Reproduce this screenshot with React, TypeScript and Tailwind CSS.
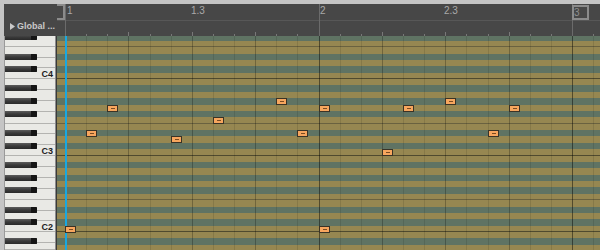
import React from "react";

// piano roll geometry (px, grid-relative)
const ROW = 6.375;
const GRID_H = 214;
const C4_BOTTOM = 43; // the B3/C4 line
const STEP = 21.125; // one triplet sixteenth
const ORIGIN = 8; // bar 1

const rowBottom = (p: number) => C4_BOTTOM + (60 - p) * ROW;
const rowTop = (p: number) => rowBottom(p + 1);
const isBlack = (p: number) => [1, 3, 6, 8, 10].includes(p % 12);
const clampY = (y: number) => Math.max(0, Math.min(GRID_H, Math.round(y)));
const xOf = (step: number) => Math.round(ORIGIN + step * STEP);

const PITCHES = Array.from({ length: 34 }, (_, i) => 66 - i); // F#4 .. A1
const STEPS = Array.from({ length: 26 }, (_, i) => i);

type Note = { step: number; pitch: number };

const notes: Note[] = [
  { step: 0, pitch: 36 },
  { step: 1, pitch: 51 },
  { step: 2, pitch: 55 },
  { step: 5, pitch: 50 },
  { step: 7, pitch: 53 },
  { step: 10, pitch: 56 },
  { step: 11, pitch: 51 },
  { step: 12, pitch: 55 },
  { step: 12, pitch: 36 },
  { step: 15, pitch: 48 },
  { step: 16, pitch: 55 },
  { step: 18, pitch: 56 },
  { step: 20, pitch: 51 },
  { step: 21, pitch: 55 },
];

type Key = { top: number; bottom: number; label?: string };

const whiteKeys: Key[] = [];
for (let c = 24; c <= 72; c += 12) {
  const base = rowBottom(c);
  const lower = (5 * ROW) / 3;
  const upper = (7 * ROW) / 4;
  for (let j = 0; j < 3; j++)
    whiteKeys.push({
      top: base - (j + 1) * lower,
      bottom: base - j * lower,
      label: j === 0 ? `C${c / 12 - 1}` : undefined,
    });
  for (let j = 0; j < 4; j++)
    whiteKeys.push({
      top: base - 5 * ROW - (j + 1) * upper,
      bottom: base - 5 * ROW - j * upper,
    });
}
const visibleKeys = whiteKeys
  .map((k) => ({ ...k, t: clampY(k.top), b: clampY(k.bottom) }))
  .filter((k) => k.b > k.t)
  .sort((a, b) => a.t - b.t);

const rulerLabels = [
  { x: 10, text: "1" },
  { x: 134, text: "1.3" },
  { x: 263, text: "2" },
  { x: 387, text: "2.3" },
];

function Ruler() {
  return (
    <div className="relative flex-1">
      <div className="absolute inset-x-0 top-[16px] h-px bg-[#575757]" />
      {STEPS.map((k) =>
        k % 12 === 0 ? (
          <div
            key={k}
            className="absolute top-0 bottom-0 w-px bg-[#6b6b6b]"
            style={{ left: xOf(k) }}
          />
        ) : (
          <div
            key={k}
            className={`absolute bottom-0 w-px bg-[#787878] ${k % 3 === 0 ? "h-[4px]" : "h-[2px]"}`}
            style={{ left: xOf(k) }}
          />
        ),
      )}
      {rulerLabels.map((l) => (
        <span
          key={l.text}
          className="absolute top-[2px] text-[10px] leading-[10px] text-[#a9a9a9]"
          style={{ left: l.x }}
        >
          {l.text}
        </span>
      ))}
      {/* loop start bracket */}
      <div className="absolute left-0 top-0 h-[16px] w-[8px] border-2 border-l-0 border-[#8b8b8b] bg-[#474747]" />
      {/* bar 3 marker */}
      <div className="absolute left-[515px] top-[1px] flex h-[15px] w-[17px] items-start border-2 border-[#8b8b8b] bg-[#474747] pt-px text-[10px] leading-[10px] text-[#8f8f8f]">
        3
      </div>
    </div>
  );
}

function Keyboard() {
  return (
    <div className="flex w-[53px] shrink-0 border-l border-[#9a9a9a]">
      <div className="relative flex w-[50px] flex-col overflow-hidden bg-[#e9e9e5]">
        {visibleKeys.map((k, i) => (
          <div
            key={i}
            className="flex shrink-0 items-end justify-end border-b border-[#b3b3b0] pr-[2px]"
            style={{ height: k.b - k.t }}
          >
            {k.label && (
              <span className="mb-[-1px] text-[9px] font-bold leading-[9px] text-[#1d1d1d]">
                {k.label}
              </span>
            )}
          </div>
        ))}
        {PITCHES.filter(isBlack).map((p) => (
          <div
            key={p}
            className="absolute left-0 flex h-[6px] w-[32px] justify-end rounded-r-[1px] bg-gradient-to-b from-[#5d5d5d] via-[#3a3a3a] to-[#2a2a2a]"
            style={{ top: Math.round(rowTop(p)) }}
          >
            <div className="h-full w-[6px] rounded-r-[1px] bg-[#151515]" />
          </div>
        ))}
      </div>
      <div className="w-px bg-[#8c8c8c]" />
      <div className="w-px bg-[#3a3a3a]" />
    </div>
  );
}

function Grid() {
  return (
    <div className="relative flex-1 overflow-hidden">
      <div className="flex flex-col">
        {PITCHES.map((p) => {
          const t = clampY(rowTop(p));
          const b = clampY(rowBottom(p));
          const line =
            p % 12 === 0
              ? "border-b border-[#4f4a2f]"
              : p % 12 === 5
                ? "border-b border-[#6a6240]"
                : "";
          return (
            <div
              key={p}
              className={`shrink-0 ${isBlack(p) ? "bg-[#5f7363]" : "bg-[#968751]"} ${line}`}
              style={{ height: b - t }}
            />
          );
        })}
      </div>
      {STEPS.map((k) => (
        <div
          key={k}
          className={`absolute top-0 bottom-0 w-px ${
            k % 12 === 0
              ? "bg-[#000]/45"
              : k % 3 === 0
                ? "bg-[#000]/25"
                : "bg-[#000]/10"
          }`}
          style={{ left: xOf(k) }}
        />
      ))}
      <div className="absolute top-0 bottom-0 left-[8px] w-[2px] bg-[#19a8e1]" />
      {notes.map((n, i) => (
        <div
          key={i}
          className="absolute flex h-[7px] w-[11px] items-center justify-center border border-[#3a3326] bg-[#f7a65e]"
          style={{ left: xOf(n.step), top: Math.round(rowTop(n.pitch)) }}
        >
          <div className="h-px w-[4px] bg-[#7a4b22]" />
        </div>
      ))}
    </div>
  );
}

export default function App() {
  return (
    <div className="flex h-[250px] w-[600px] flex-col overflow-hidden bg-[#c5c5c5] pt-[4px] pl-[4px] font-['Liberation_Sans',Arial,sans-serif]">
      <div className="flex h-[32px] shrink-0 bg-[#474747]">
        <div className="flex w-[53px] shrink-0 items-start gap-[2px] pt-[18px] pl-[6px]">
          <svg width="5" height="7" viewBox="0 0 5 7" className="mt-px">
            <path d="M0 0 L5 3.5 L0 7 Z" fill="#c9c9c9" />
          </svg>
          <span className="whitespace-nowrap text-[9px] font-bold leading-[9px] text-[#c9c9c9]">
            Global ...
          </span>
        </div>
        <Ruler />
      </div>
      <div className="flex h-[214px] shrink-0">
        <Keyboard />
        <Grid />
      </div>
    </div>
  );
}
